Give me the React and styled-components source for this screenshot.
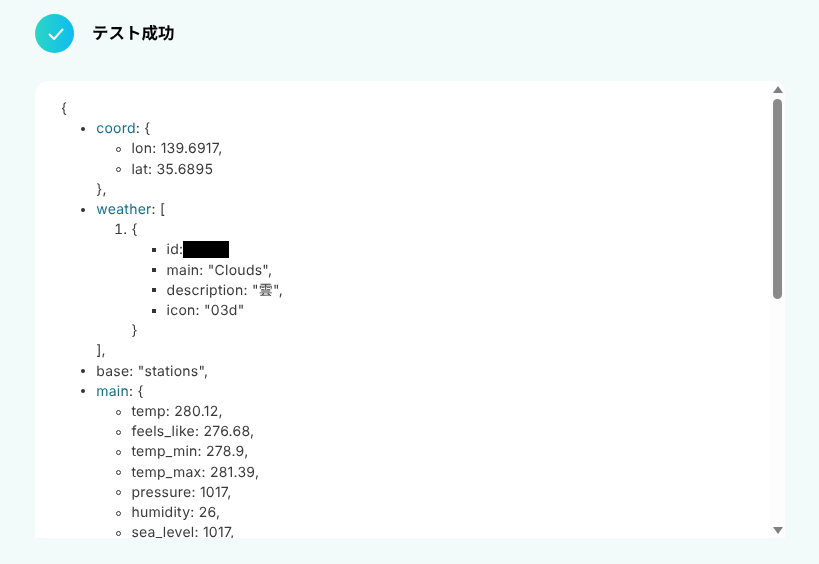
import React from "react";
import styled, { createGlobalStyle, css } from "styled-components";

const GlobalStyle = createGlobalStyle`
  html, body {
    margin: 0;
    height: 100%;
    overflow: hidden;
    background: #f2fbfa;
  }
`;

const CheckIcon = () => (
  <svg width="18" height="18" viewBox="0 0 18 18" fill="none">
    <path d="M3.5 9.5L8 14L16.5 4.5" stroke="#fff" strokeWidth="2" strokeLinecap="round" strokeLinejoin="round" />
  </svg>
);

const App = () => {
  return (
    <Page>
      <GlobalStyle />
      <Header>
        <Badge>
          <CheckIcon />
        </Badge>
        <Title>テスト成功</Title>
      </Header>
      <Card>
        <Content>
          <div>{"{"}</div>
          <List>
            <Item kind="disc">
              <Key>coord</Key>: {"{"}
              <List>
                <Item kind="circle">lon: 139.6917,</Item>
                <Item kind="circle">lat: 35.6895</Item>
              </List>
              {"},"}
            </Item>
            <Item kind="disc">
              <Key>weather</Key>: [
              <Numbers>
                <li>
                  {"{"}
                  <List>
                    <Item kind="square">
                      id:<Redacted />
                    </Item>
                    <Item kind="square">main: "Clouds",</Item>
                    <Item kind="square">description: "雲",</Item>
                    <Item kind="square">icon: "03d"</Item>
                  </List>
                  {"}"}
                </li>
              </Numbers>
              ],
            </Item>
            <Item kind="disc">base: "stations",</Item>
            <Item kind="disc">
              <Key>main</Key>: {"{"}
              <List>
                <Item kind="circle">temp: 280.12,</Item>
                <Item kind="circle">feels_like: 276.68,</Item>
                <Item kind="circle">temp_min: 278.9,</Item>
                <Item kind="circle">temp_max: 281.39,</Item>
                <Item kind="circle">pressure: 1017,</Item>
                <Item kind="circle">humidity: 26,</Item>
                <Item kind="circle">sea_level: 1017,</Item>
                <Item kind="circle">grnd_level: 1015</Item>
              </List>
              {"},"}
            </Item>
          </List>
        </Content>
        <ScrollRail>
          <ArrowUp />
          <ThumbTrack>
            <Thumb />
          </ThumbTrack>
          <ArrowDown />
        </ScrollRail>
      </Card>
    </Page>
  );
};

const Page = styled.div`
  height: 564px;
  box-sizing: border-box;
  padding: 14px 34px 26px 35px;
  display: flex;
  flex-direction: column;
  gap: 28px;
  font-family: Inter, "Noto Sans CJK JP", sans-serif;
  text-rendering: geometricPrecision;
`;

const Header = styled.div`
  display: flex;
  align-items: center;
  gap: 18px;
  height: 39px;
  flex-shrink: 0;
`;

const Badge = styled.div`
  width: 39px;
  height: 39px;
  border-radius: 50%;
  display: flex;
  align-items: center;
  justify-content: center;
  background: linear-gradient(90deg, #2ad6c4, #0fbcf0);
`;

const Title = styled.h1`
  margin: 0 0 1px;
  font-size: 16.5px;
  line-height: 24px;
  font-weight: 700;
  color: #000;
  transform: translateZ(0);
`;

const Card = styled.div`
  flex: 1;
  min-height: 0;
  display: flex;
  background: #fff;
  border-radius: 14px 14px 0 0;
  overflow: hidden;
`;

const Content = styled.div`
  flex: 1;
  overflow: hidden;
  padding: 18px 0 0 26px;
  font-size: 14px;
  line-height: 20.2px;
  letter-spacing: 0.25px;
  color: #3a3a3a;
  transform: translateZ(0);
`;

const List = styled.ul`
  margin: 0;
  padding-left: 35.2px;
  list-style: none;
`;

const markers = {
  disc: css`
    width: 4px;
    height: 4px;
    border-radius: 50%;
    background: #333;
  `,
  circle: css`
    width: 5px;
    height: 5px;
    border-radius: 50%;
    border: 1px solid #333;
    box-sizing: border-box;
  `,
  square: css`
    width: 4px;
    height: 4px;
    background: #333;
  `,
};

const Item = styled.li`
  position: relative;

  &::before {
    content: "";
    position: absolute;
    left: -15px;
    top: 7.5px;
    ${(p) => markers[p.kind]}
  }
`;

const Numbers = styled.ol`
  margin: 0;
  padding-left: 35.2px;
`;

const Key = styled.span`
  color: #136f8c;
`;

const Redacted = styled.span`
  display: inline-block;
  width: 46px;
  height: 17px;
  background: #000;
  vertical-align: -4px;
`;

const ScrollRail = styled.div`
  width: 15px;
  flex-shrink: 0;
  display: flex;
  flex-direction: column;
  align-items: center;
  background: #fdfdfd;
  padding: 5px 0 4px;
  box-sizing: border-box;
`;

const ArrowUp = styled.div`
  width: 0;
  height: 0;
  border-left: 5px solid transparent;
  border-right: 5px solid transparent;
  border-bottom: 7px solid #808080;
`;

const ArrowDown = styled.div`
  width: 0;
  height: 0;
  border-left: 5px solid transparent;
  border-right: 5px solid transparent;
  border-top: 7px solid #808080;
`;

const ThumbTrack = styled.div`
  flex: 1;
  width: 100%;
  display: flex;
  justify-content: center;
  padding-top: 6px;
`;

const Thumb = styled.div`
  width: 9px;
  height: 200px;
  background: #8a8a8a;
  border-radius: 5px;
`;

export default App;
